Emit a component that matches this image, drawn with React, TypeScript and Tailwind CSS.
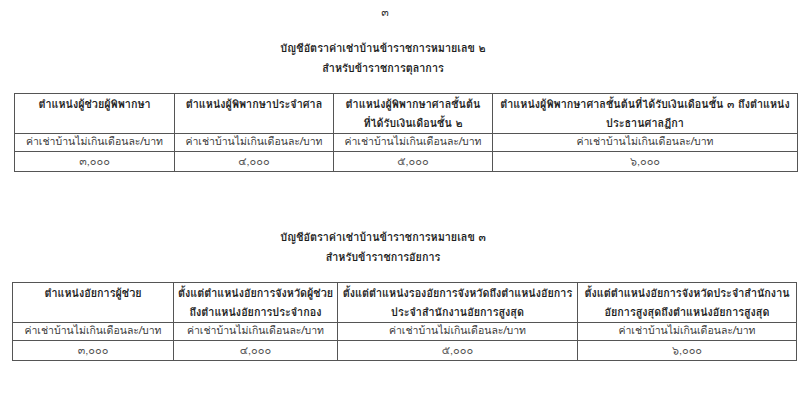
const font = { fontFamily: '"Loma", "Noto Sans", "DejaVu Sans", sans-serif' }

const rentLabel = 'ค่าเช่าบ้านไม่เกินเดือนละ/บาท'

interface Schedule {
  title: string
  subtitle: string
  cols: string[]
  headers: string[][]
}

const schedules: Schedule[] = [
  {
    title: 'บัญชีอัตราค่าเช่าบ้านข้าราชการหมายเลข ๒',
    subtitle: 'สำหรับข้าราชการตุลาการ',
    cols: ['w-[160px]', 'w-[159px]', 'w-[159px]', 'w-[305px]'],
    headers: [
      ['ตำแหน่งผู้ช่วยผู้พิพากษา'],
      ['ตำแหน่งผู้พิพากษาประจำศาล'],
      ['ตำแหน่งผู้พิพากษาศาลชั้นต้น', 'ที่ได้รับเงินเดือนชั้น ๒'],
      ['ตำแหน่งผู้พิพากษาศาลชั้นต้นที่ได้รับเงินเดือนชั้น ๓ ถึงตำแหน่ง', 'ประธานศาลฎีกา'],
    ],
  },
  {
    title: 'บัญชีอัตราค่าเช่าบ้านข้าราชการหมายเลข ๓',
    subtitle: 'สำหรับข้าราชการอัยการ',
    cols: ['w-[161px]', 'w-[164px]', 'w-[240px]', 'w-[219px]'],
    headers: [
      ['ตำแหน่งอัยการผู้ช่วย'],
      ['ตั้งแต่ตำแหน่งอัยการจังหวัดผู้ช่วย', 'ถึงตำแหน่งอัยการประจำกอง'],
      ['ตั้งแต่ตำแหน่งรองอัยการจังหวัดถึงตำแหน่งอัยการ', 'ประจำสำนักงานอัยการสูงสุด'],
      ['ตั้งแต่ตำแหน่งอัยการจังหวัดประจำสำนักงาน', 'อัยการสูงสุดถึงตำแหน่งอัยการสูงสุด'],
    ],
  },
]

const amounts = ['๓,๐๐๐', '๔,๐๐๐', '๕,๐๐๐', '๖,๐๐๐']

function RentTable({ s, left }: { s: Schedule; left: string }) {
  return (
    <div>
      <div className="flex flex-col items-center w-[766px] text-[10.8px] font-bold text-[#1e1e1e] leading-[20px]">
        <div>{s.title}</div>
        <div>{s.subtitle}</div>
      </div>
      <table className={`mt-[14px] ${left} border-collapse table-fixed`}>
        <colgroup>
          {s.cols.map((c, i) => (
            <col key={i} className={c} />
          ))}
        </colgroup>
        <tbody>
          <tr className="h-[38px]">
            {s.headers.map((h, i) => (
              <th
                key={i}
                className="border border-[#555] align-top pt-[1px] text-[10.8px] leading-[19px] font-bold text-[#1e1e1e] whitespace-nowrap"
              >
                {h.map((line, j) => (
                  <div key={j}>{line}</div>
                ))}
              </th>
            ))}
          </tr>
          <tr className="h-[18px]">
            {amounts.map((_, i) => (
              <td key={i} className="border border-[#555] text-center text-[10.5px] leading-[16px] text-[#3a3a3a] whitespace-nowrap">
                {rentLabel}
              </td>
            ))}
          </tr>
          <tr className="h-[20px]">
            {amounts.map((a) => (
              <td key={a} className="border border-[#555] text-center text-[11px] leading-[16px] text-[#555]">
                {a}
              </td>
            ))}
          </tr>
        </tbody>
      </table>
    </div>
  )
}

export default function App() {
  return (
    <div className="w-[800px] h-[413px] bg-white overflow-hidden" style={font}>
      <div className="pt-[4px] text-center w-[770px] text-[11px] text-[#333]">๓</div>
      <div className="mt-[18px]">
        <RentTable s={schedules[0]} left="ml-[14px]" />
      </div>
      <div className="mt-[56px]">
        <RentTable s={schedules[1]} left="ml-[12px]" />
      </div>
    </div>
  )
}
